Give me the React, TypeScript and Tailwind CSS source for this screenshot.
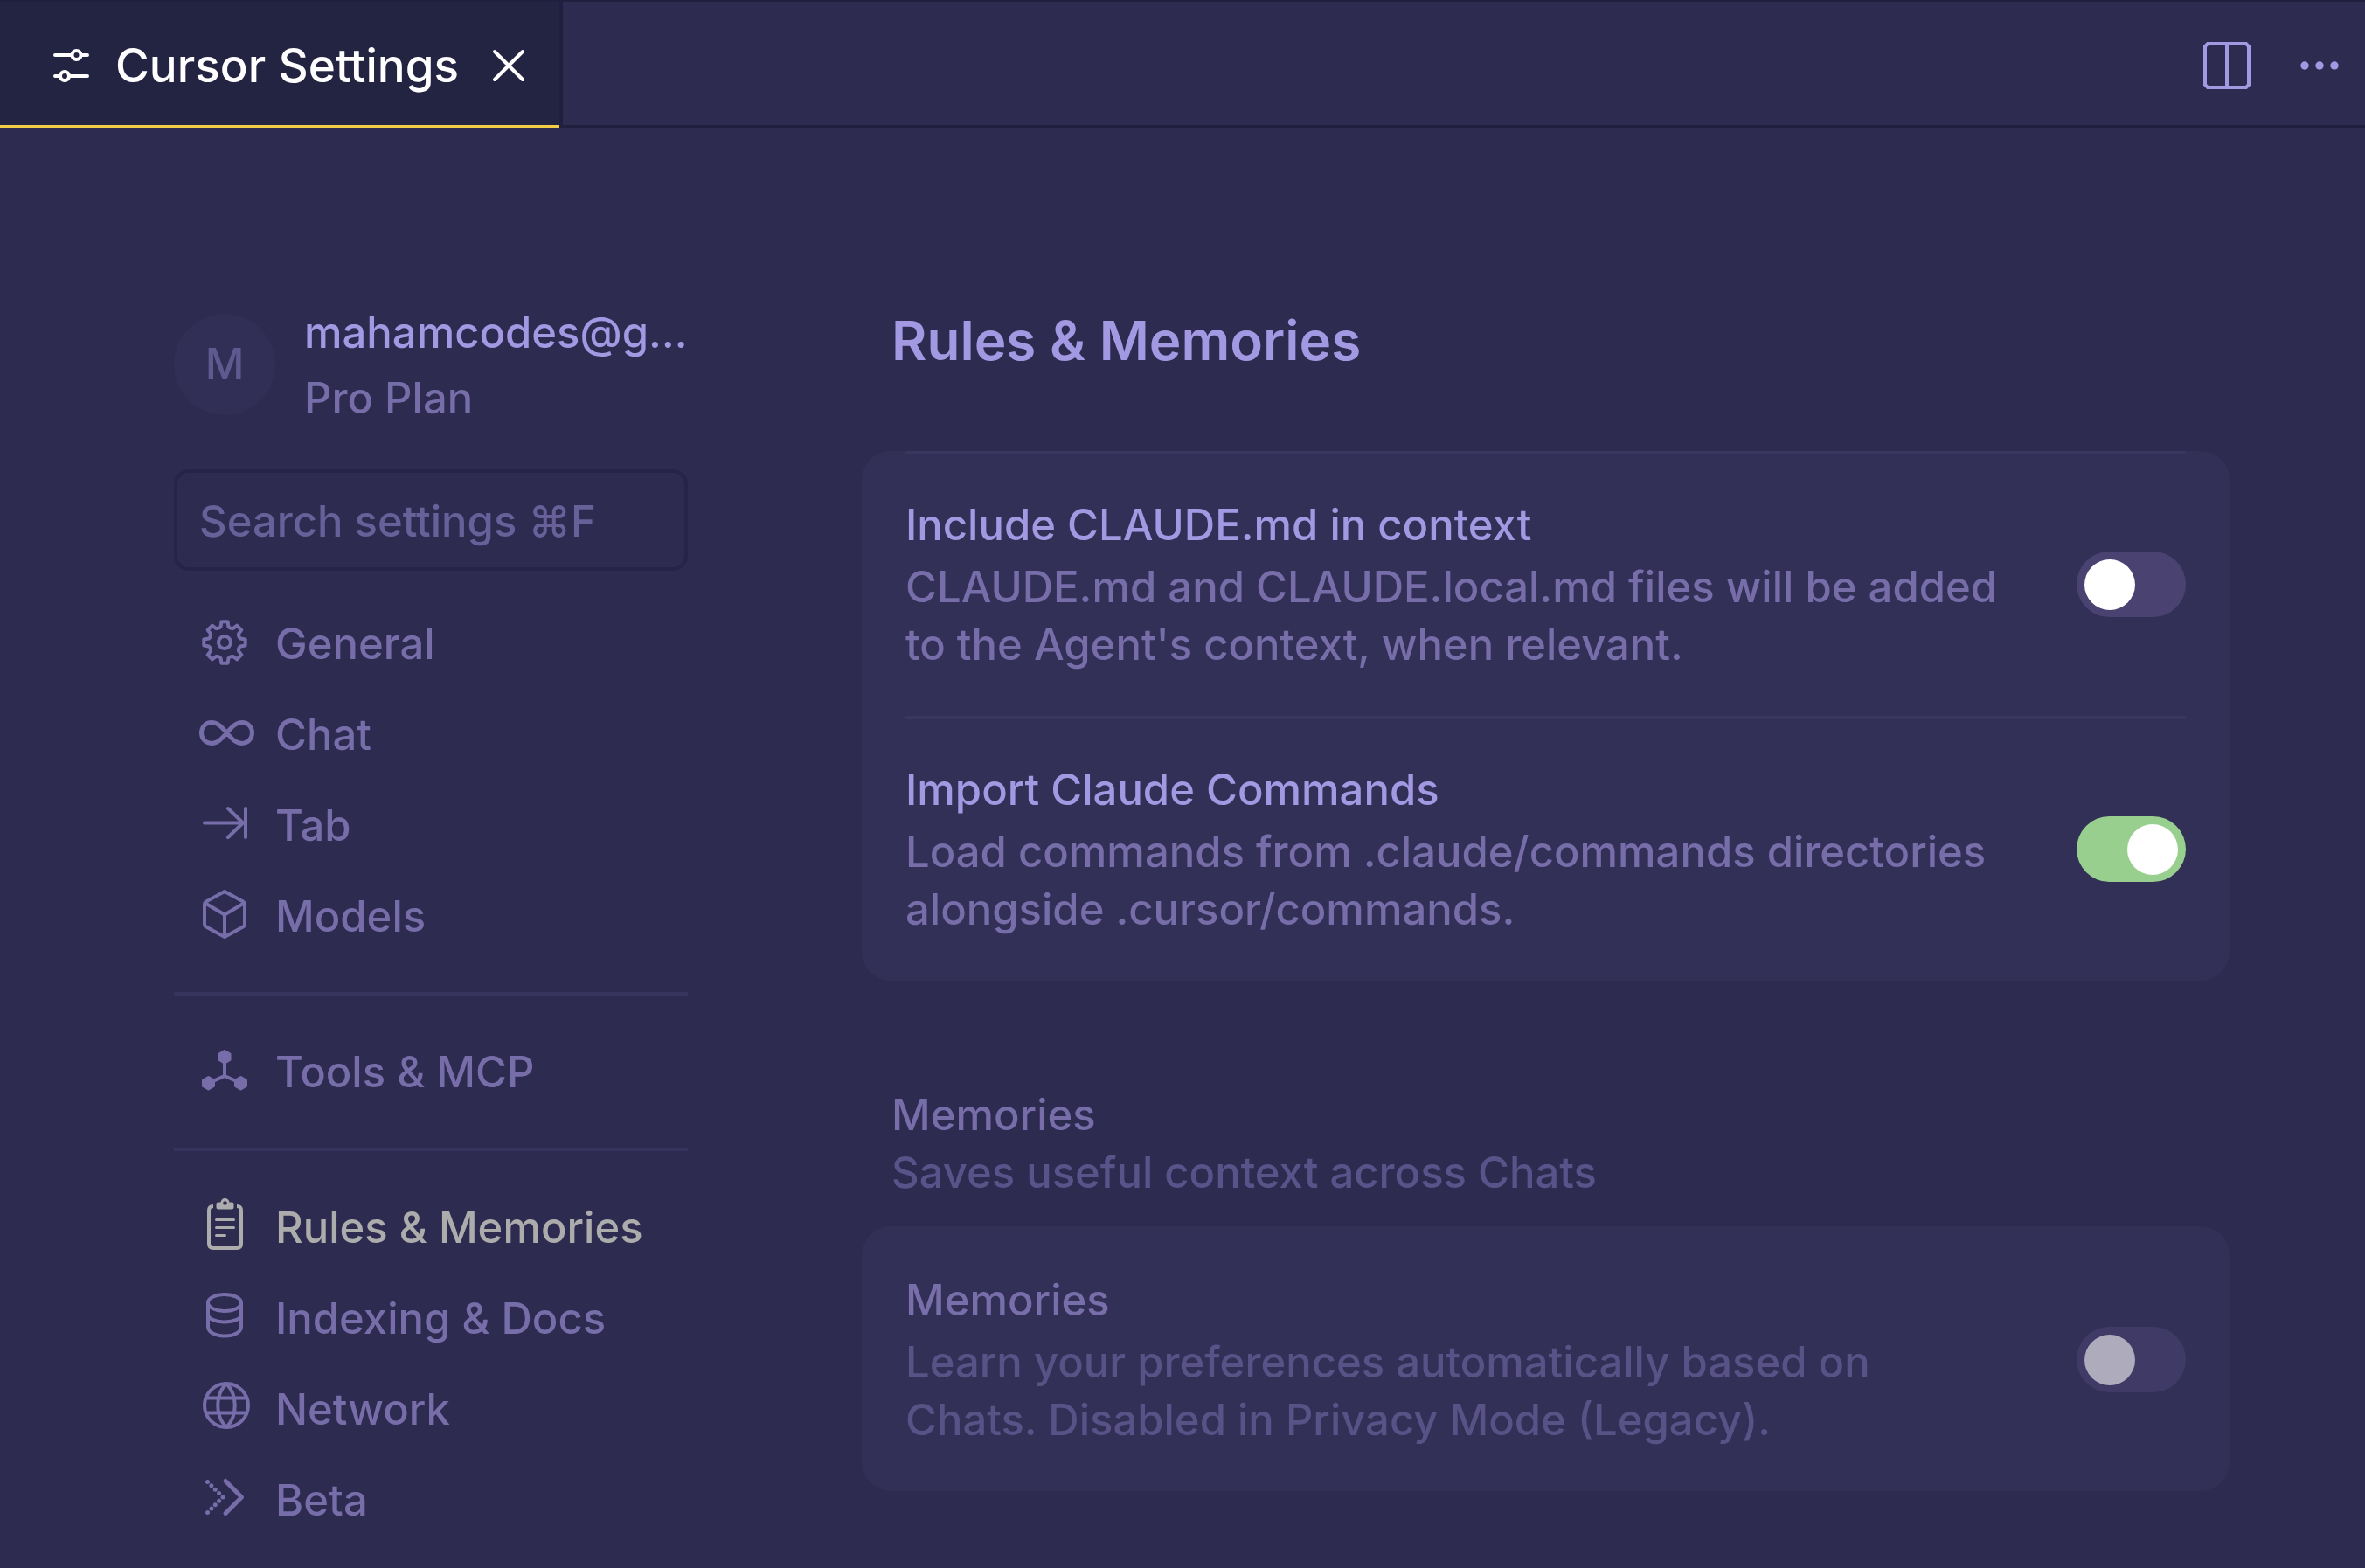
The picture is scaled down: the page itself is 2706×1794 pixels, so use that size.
import type { ReactNode } from 'react';

type NavItem = { label: string; icon: ReactNode; active?: boolean };

function Icon({ children, stroke = 4 }: { children: ReactNode; stroke?: number }) {
    return (
        <svg
            viewBox="0 0 66 66"
            className="w-[66px] h-[66px] shrink-0 overflow-visible"
            fill="none"
            stroke="currentColor"
            strokeWidth={stroke}
            strokeLinecap="round"
            strokeLinejoin="round"
            aria-hidden="true"
        >
            {children}
        </svg>
    );
}

// Outline of an eight-toothed gear centred on (33, 32)
function gearPath() {
    const points: string[] = [];
    for (let i = 0; i < 8; i++) {
        const base = (i * Math.PI) / 4;
        const steps: [number, number][] = [
            [-0.33, 17.8],
            [-0.24, 18.6],
            [-0.15, 24],
            [0.15, 24],
            [0.24, 18.6],
            [0.33, 17.8],
        ];
        steps.forEach(([offset, radius]) => {
            const x = 33 + radius * Math.sin(base + offset);
            const y = 32 - radius * Math.cos(base + offset);
            points.push(`${x.toFixed(1)} ${y.toFixed(1)}`);
        });
    }
    return `M${points.join('L')}Z`;
}

const GearIcon = () => (
    <Icon>
        <path d={gearPath()} />
        <circle cx="33" cy="32" r="7" />
    </Icon>
);

const InfinityIcon = () => (
    <Icon stroke={5}>
        <path d="M35.5 31.5C30 25 25 19.5 18 19.5C11 19.5 6.5 25 6.5 31.5C6.5 38 11 43.5 18 43.5C25 43.5 30 38 35.5 31.5C41 25 46 19.5 53 19.5C60 19.5 64.5 25 64.5 31.5C64.5 38 60 43.5 53 43.5C46 43.5 41 38 35.5 31.5Z" />
    </Icon>
);

const TabIcon = () => (
    <Icon>
        <path d="M10 30.5H54M37 14L54 30.5L37 47M57 14V47" />
    </Icon>
);

const CubeIcon = () => (
    <Icon>
        <path d="M33 5L54 16.5Q56 17.6 56 20V42Q56 44.5 54 45.6L33 57L12 45.6Q10 44.5 10 42V20Q10 17.6 12 16.5Z" />
        <path d="M11 18.5L33 31.5L55 18.5M33 31.5V56" />
    </Icon>
);

const ToolsIcon = () => (
    <Icon>
        <path d="M33 16V38M33 38L15 46M33 38L51 46" />
        <g fill="currentColor" strokeWidth="3">
            <path d="M33 9.5L39 13V19.5L33 23L27 19.5V13Z" />
            <path d="M14.5 39.5L20.5 43V49.5L14.5 53L8.5 49.5V43Z" />
            <path d="M51.5 39.5L57.5 43V49.5L51.5 53L45.5 49.5V43Z" />
        </g>
    </Icon>
);

const ClipboardIcon = () => (
    <Icon>
        <path d="M20 9Q15 9 15 14V52Q15 57 20 57H47Q52 57 52 52V14Q52 9 47 9" strokeLinecap="butt" />
        <path d="M23.5 24.5H43.5M23.5 33.5H43.5M23.5 42.5H33.5" strokeWidth="3" />
        <path
            d="M25.5 4.5H28.5C29 1.5 31 0 33.5 0C36 0 38 1.5 38.5 4.5H41.5Q43.5 4.5 43.5 6.5V10Q43.5 12.5 41 12.5H26Q23.5 12.5 23.5 10V6.5Q23.5 4.5 25.5 4.5ZM33.5 3.2A2.3 2.3 0 1 0 33.5 7.8A2.3 2.3 0 1 0 33.5 3.2Z"
            fill="currentColor"
            fillRule="evenodd"
            stroke="none"
        />
    </Icon>
);

const DatabaseIcon = () => (
    <Icon>
        <ellipse cx="33" cy="15.5" rx="19" ry="9.5" />
        <path d="M14 15.5V43C14 49 22 53.5 33 53.5C44 53.5 52 49 52 43V15.5M14 29C14 33.5 22 37.5 33 37.5C44 37.5 52 33.5 52 29" />
    </Icon>
);

const GlobeIcon = () => (
    <Icon>
        <circle cx="35" cy="29" r="25" />
        <path d="M12 20.5H58M12 37.5H58M35 4C22 17 22 41 35 54M35 4C48 17 48 41 35 54" />
    </Icon>
);

const BetaIcon = () => (
    <Icon stroke={5}>
        <path d="M34 11.5L52.5 30L34 48.5" />
        <path d="M13.5 12.5L31 30L13.5 47.5" strokeDasharray="0 6.18" />
    </Icon>
);

const navGroups: NavItem[][] = [
    [
        { label: 'General', icon: <GearIcon /> },
        { label: 'Chat', icon: <InfinityIcon /> },
        { label: 'Tab', icon: <TabIcon /> },
        { label: 'Models', icon: <CubeIcon /> },
    ],
    [{ label: 'Tools & MCP', icon: <ToolsIcon /> }],
    [
        { label: 'Rules & Memories', icon: <ClipboardIcon />, active: true },
        { label: 'Indexing & Docs', icon: <DatabaseIcon /> },
        { label: 'Network', icon: <GlobeIcon /> },
        { label: 'Beta', icon: <BetaIcon /> },
    ],
];

function TabBar() {
    return (
        <header className="flex items-stretch h-[147px] border-t-2 border-[#201f3f]">
            <div className="flex items-center w-[644px] shrink-0 border-r-4 border-[#201f3f] bg-[#232342]">
                <div className="flex items-center w-full h-full pt-1 pl-[60px] border-b-4 border-[#f1ce45] text-white">
                    <svg viewBox="0 0 42 38" className="w-[42px] h-[38px] shrink-0" fill="none" stroke="currentColor" strokeWidth="4" strokeLinecap="round" aria-hidden="true">
                        <path d="M3 7H21M33 7H40M3 31H9M21 31H40" />
                        <circle cx="27.5" cy="7" r="5" />
                        <circle cx="14" cy="31" r="5" />
                    </svg>
                    <span className="ml-[30px] text-[53px] leading-[66px] whitespace-nowrap">Cursor Settings</span>
                    <button type="button" aria-label="Close tab" className="ml-auto mr-[39px]">
                        <svg viewBox="0 0 38 38" className="block w-[38px] h-[38px]" fill="none" stroke="currentColor" strokeWidth="4" strokeLinecap="round">
                            <path d="M3 3L35 35M35 3L3 35" />
                        </svg>
                    </button>
                </div>
            </div>
            <div className="flex flex-1 items-center justify-end gap-[57px] pt-1 pr-[30px] border-b-4 border-[#201f3f] text-[#a398e2]">
                <button type="button" aria-label="Split editor">
                    <svg viewBox="0 0 54 54" className="block w-[54px] h-[54px]" fill="none" stroke="currentColor" strokeWidth="4">
                        <path d="M5 2H49L52 5V49L49 52H5L2 49V5Z" />
                        <path d="M27 2V52" />
                    </svg>
                </button>
                <button type="button" aria-label="More actions">
                    <svg viewBox="0 0 44 12" className="block w-[44px] h-[12px]" fill="currentColor">
                        <circle cx="5" cy="6" r="4.7" />
                        <circle cx="22" cy="6" r="4.7" />
                        <circle cx="39" cy="6" r="4.7" />
                    </svg>
                </button>
            </div>
        </header>
    );
}

function Sidebar() {
    return (
        <aside className="w-[588px] shrink-0">
            <div className="flex items-center gap-[33px] h-[116px]">
                <div className="flex items-center justify-center w-[116px] h-[116px] shrink-0 rounded-full bg-[#322f57] text-[#5f5990]">M</div>
                <div className="flex flex-col gap-[9px] min-w-0 pt-[2px]">
                    <span className="text-[#a398e2] whitespace-nowrap">mahamcodes@g…</span>
                    <span className="text-[#766da9]">Pro Plan</span>
                </div>
            </div>

            <input
                type="text"
                aria-label="Search settings"
                placeholder="Search settings ⌘F"
                className="block w-full h-[116px] mt-[62px] mb-[31px] px-[25px] pt-[2px] rounded-[17px] border-4 border-[#262448] bg-transparent text-[#a398e2] placeholder:text-[#676099] placeholder:opacity-100 outline-none"
            />

            <nav>
                {navGroups.map((group, index) => (
                    <div key={index}>
                        {index > 0 && <hr className="my-[35px] border-0 h-1 bg-[#37325e]" />}
                        {group.map((item) => (
                            <a
                                key={item.label}
                                href="#"
                                className={`flex items-center gap-[25px] h-[104px] pl-[25px] whitespace-nowrap ${item.active ? 'text-[#acacac]' : 'text-[#766da9]'}`}
                            >
                                {item.icon}
                                <span className="pt-[2px]">{item.label}</span>
                            </a>
                        ))}
                    </div>
                ))}
            </nav>
        </aside>
    );
}

type SettingProps = {
    id: string;
    title: string;
    lines: string[];
    checked?: boolean;
    disabled?: boolean;
    divider?: boolean;
};

function Setting({ id, title, lines, checked, disabled, divider }: SettingProps) {
    return (
        <div className={`flex items-center justify-between border-t-4 pt-[46px] pb-[48px] ${divider ? 'border-[#3a365f]' : 'border-transparent'}`}>
            <label htmlFor={id} className="flex flex-col gap-[5px] pt-[2px] whitespace-nowrap">
                <span className={disabled ? 'text-[#776eaa]' : 'text-[#a398e2]'}>{title}</span>
                <span className={disabled ? 'text-[#595286]' : 'text-[#766da9]'}>
                    {lines.map((line) => (
                        <span key={line} className="block">{line}</span>
                    ))}
                </span>
            </label>
            <input
                id={id}
                type="checkbox"
                role="switch"
                defaultChecked={checked}
                disabled={disabled}
                className="appearance-none flex items-center w-[125px] h-[75px] shrink-0 px-[9px] rounded-full bg-[#4a4372] checked:bg-[#99cf8e] checked:justify-end disabled:bg-[#3f3a66] before:block before:w-[58px] before:h-[58px] before:rounded-full before:bg-white disabled:before:bg-[#aeabbd]"
            />
        </div>
    );
}

function Card({ children }: { children: ReactNode }) {
    return <div className="px-[50px] rounded-[33px] bg-[#333057]">{children}</div>;
}

export default function App() {
    return (
        <div className="min-h-screen bg-[#2e2b51] font-['Inter','Noto_Sans',sans-serif] font-[450] text-[49px] leading-[66px]">
            <TabBar />
            <div className="flex gap-[199px] pl-[199px] pr-[155px] pt-[212px]">
                <Sidebar />
                <main className="flex-1 min-w-0">
                    <h1 className="pl-[34px] mb-[95px] text-[62px] leading-[62px] font-semibold text-[#a398e2]">Rules &amp; Memories</h1>

                    <Card>
                        <Setting
                            id="include-claude-md"
                            title="Include CLAUDE.md in context"
                            lines={['CLAUDE.md and CLAUDE.local.md files will be added', "to the Agent's context, when relevant."]}
                            divider
                        />
                        <Setting
                            id="import-claude-commands"
                            title="Import Claude Commands"
                            lines={['Load commands from .claude/commands directories', 'alongside .cursor/commands.']}
                            checked
                            divider
                        />
                    </Card>

                    <section className="mt-[121px]">
                        <div className="pl-[34px] mb-[28px]">
                            <h2 className="text-[#766da9]">Memories</h2>
                            <p className="text-[#5a5389]">Saves useful context across Chats</p>
                        </div>
                        <Card>
                            <Setting
                                id="memories"
                                title="Memories"
                                lines={['Learn your preferences automatically based on', 'Chats. Disabled in Privacy Mode (Legacy).']}
                                disabled
                            />
                        </Card>
                    </section>
                </main>
            </div>
        </div>
    );
}
